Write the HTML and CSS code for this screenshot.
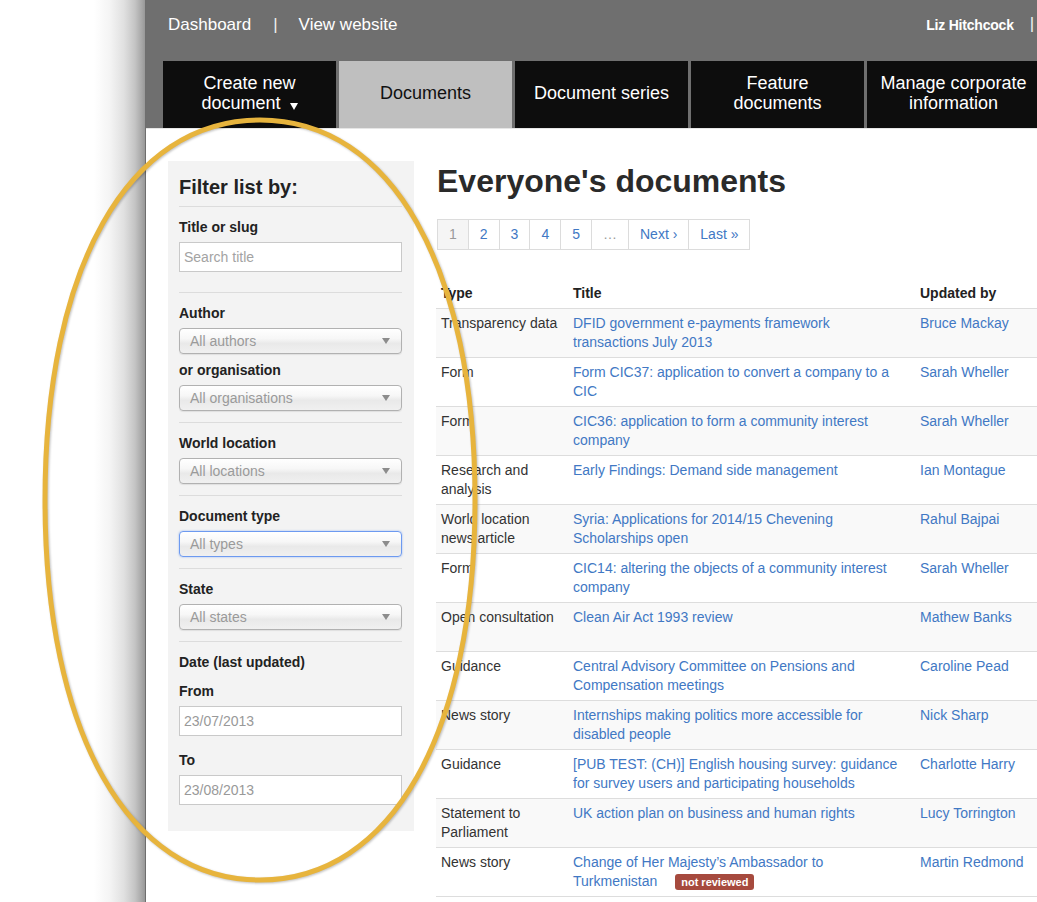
FILE: index.html
```html
<!DOCTYPE html>
<html lang="en">
<head>
<meta charset="utf-8">
<title>Everyone's documents</title>
<link rel="stylesheet" href="styles.css">
</head>
<body>
<div class="frame">
  <div class="edge"></div>
  <div class="page">
    <header class="topbar">
      <div class="topnav">
        <a href="#">Dashboard</a><span class="sep">|</span><a href="#">View website</a>
        <div class="user"><span>Liz Hitchcock</span><span class="sep">|</span></div>
      </div>
      <nav class="tabs">
        <a class="tab" href="#"><span>Create new<br>document<i class="caret"></i></span></a>
        <a class="tab active" href="#"><span>Documents</span></a>
        <a class="tab" href="#"><span>Document series</span></a>
        <a class="tab" href="#"><span>Feature<br>documents</span></a>
        <a class="tab" href="#"><span>Manage corporate<br>information</span></a>
      </nav>
    </header>

    <div class="content">
      <aside class="filter">
        <h2 class="filter-title">Filter list by:</h2>
        <div class="fsec fsec-title">
          <label class="flabel">Title or slug</label>
          <input class="finput" type="text" placeholder="Search title">
        </div>
        <div class="fsec">
          <label class="flabel">Author</label>
          <div class="fsel"><span>All authors</span><i class="arrow"></i></div>
          <label class="flabel">or organisation</label>
          <div class="fsel"><span>All organisations</span><i class="arrow"></i></div>
        </div>
        <div class="fsec">
          <label class="flabel">World location</label>
          <div class="fsel"><span>All locations</span><i class="arrow"></i></div>
        </div>
        <div class="fsec">
          <label class="flabel">Document type</label>
          <div class="fsel focus"><span>All types</span><i class="arrow"></i></div>
        </div>
        <div class="fsec">
          <label class="flabel">State</label>
          <div class="fsel"><span>All states</span><i class="arrow"></i></div>
        </div>
        <div class="fsec fsec-date">
          <div class="flabel date-head">Date (last updated)</div>
          <label class="flabel">From</label>
          <input class="finput date-in" type="text" value="23/07/2013">
          <label class="flabel">To</label>
          <input class="finput" type="text" value="23/08/2013">
        </div>
      </aside>

      <main class="main">
        <h1>Everyone's documents</h1>
        <div class="pager">
          <a href="#">1</a><a href="#">2</a><a href="#">3</a><a href="#">4</a><a href="#">5</a><a href="#">…</a><a href="#">Next ›</a><a href="#">Last »</a>
        </div>
        <table class="docs">
          <colgroup><col class="c-type"><col class="c-title"><col class="c-upd"></colgroup>
          <thead>
            <tr><th>Type</th><th>Title</th><th>Updated by</th></tr>
          </thead>
          <tbody>
            <tr><td>Transparency data</td><td><a href="#">DFID government e-payments framework<br>transactions July 2013</a></td><td><a href="#">Bruce Mackay</a></td></tr>
            <tr><td>Form</td><td><a href="#">Form CIC37: application to convert a company to a<br>CIC</a></td><td><a href="#">Sarah Wheller</a></td></tr>
            <tr><td>Form</td><td><a href="#">CIC36: application to form a community interest<br>company</a></td><td><a href="#">Sarah Wheller</a></td></tr>
            <tr><td>Research and<br>analysis</td><td><a href="#">Early Findings: Demand side management</a></td><td><a href="#">Ian Montague</a></td></tr>
            <tr><td>World location<br>news article</td><td><a href="#">Syria: Applications for 2014/15 Chevening<br>Scholarships open</a></td><td><a href="#">Rahul Bajpai</a></td></tr>
            <tr><td>Form</td><td><a href="#">CIC14: altering the objects of a community interest<br>company</a></td><td><a href="#">Sarah Wheller</a></td></tr>
            <tr><td>Open consultation</td><td><a href="#">Clean Air Act 1993 review</a></td><td><a href="#">Mathew Banks</a></td></tr>
            <tr><td>Guidance</td><td><a href="#">Central Advisory Committee on Pensions and<br>Compensation meetings</a></td><td><a href="#">Caroline Pead</a></td></tr>
            <tr><td>News story</td><td><a href="#">Internships making politics more accessible for<br>disabled people</a></td><td><a href="#">Nick Sharp</a></td></tr>
            <tr><td>Guidance</td><td><a href="#">[PUB TEST: (CH)] English housing survey: guidance<br>for survey users and participating households</a></td><td><a href="#">Charlotte Harry</a></td></tr>
            <tr><td>Statement to<br>Parliament</td><td><a href="#">UK action plan on business and human rights</a></td><td><a href="#">Lucy Torrington</a></td></tr>
            <tr><td>News story</td><td><a href="#">Change of Her Majesty’s Ambassador to<br>Turkmenistan</a> <span class="badge">not reviewed</span></td><td><a href="#">Martin Redmond</a></td></tr>
          </tbody>
        </table>
      </main>
    </div>
  </div>
</div>

<svg class="annotation" width="1037" height="902" viewBox="0 0 1037 902" aria-hidden="true">
  <path d="M475 500 C475 732.8 391.7 880 260 880 C128.3 880 45 732.8 45 500 C45 267.2 128.3 120 260 120 C391.7 120 475 267.2 475 500 Z" fill="none" stroke="#e7b43d" stroke-width="5"/>
</svg>
</body>
</html>
```
FILE: styles.css
```css
* { box-sizing: border-box; }

html, body {
  margin: 0;
  height: 902px;
  overflow: hidden;
  background: #fff;
}

body {
  font-family: "Liberation Sans", Arial, sans-serif;
  font-size: 14px;
  color: #333;
}

a { text-decoration: none; }

.frame {
  display: flex;
  width: 1037px;
  height: 902px;
  overflow: hidden;
}

.edge {
  flex: none;
  width: 146px;
  background: linear-gradient(to right,
    #fff 0, #fff 94px, #f4f4f4 110px, #e0e0e0 124px, #c4c4c4 135px,
    #a6a6a6 142px, #9a9a9a 144.5px, #6e6e6e 145px, #6e6e6e 146px);
}

.page {
  flex: none;
  width: 977px;
}

/* ---------- top bar ---------- */
.topbar {
  background: #6f6f6f;
  border-bottom: 1px solid #e6e6e6;
}

.topnav {
  display: flex;
  height: 61px;
  padding: 15px 22px 0;
  line-height: 20px;
  color: #fff;
}

.topnav a {
  color: #fff;
  font-size: 17px;
}

.sep {
  font-size: 17px;
  margin: 0 21px 0 22px;
  color: #f0f0f0;
}

.user {
  margin-left: auto;
  margin-right: 67px;
  display: flex;
  font-size: 14px;
  font-weight: bold;
  letter-spacing: -0.2px;
}

.user .sep {
  margin: -1px 0 0 16px;
  font-weight: normal;
}

.tabs {
  display: flex;
  gap: 3px;
  margin-left: 17px;
  height: 67px;
}

.tab {
  flex: none;
  width: 173px;
  background: #0d0d0d;
  color: #fff;
  font-size: 18px;
  line-height: 20px;
  text-align: center;
  display: flex;
  align-items: center;
  justify-content: center;
  padding-bottom: 3px;
}

.tab.active {
  background: #bfbfbf;
  color: #111;
}

.caret {
  display: inline-block;
  width: 0;
  height: 0;
  margin-left: 9px;
  border-left: 4px solid transparent;
  border-right: 4px solid transparent;
  border-top: 7px solid #fff;
  vertical-align: -1px;
}

/* ---------- content ---------- */
.content {
  display: flex;
  align-items: flex-start;
  gap: 23px;
  padding: 32px 0 0 22px;
}

.filter {
  flex: none;
  width: 246px;
  background: #f3f3f3;
  padding: 14px 12px 0 11px;
}

.filter-title {
  margin: 0 0 7px;
  font-size: 20px;
  line-height: 24px;
  font-weight: bold;
  color: #222;
}

.fsec {
  border-top: 1px solid #dcdcdc;
  padding: 10px 0 11px;
}

.fsec-title { padding-bottom: 20px; }
.fsec-date { padding-bottom: 26px; }

.flabel {
  display: block;
  font-size: 14px;
  line-height: 20px;
  font-weight: bold;
  color: #222;
  margin-bottom: 5px;
}

.fsel + .flabel { margin-top: 6px; }
.flabel.date-head { margin-bottom: 9px; }

.finput {
  display: block;
  width: 100%;
  height: 30px;
  margin: 0;
  border: 1px solid #c9c9c9;
  background: #fff;
  padding: 0 4px;
  font: 14px "Liberation Sans", Arial, sans-serif;
  color: #999;
}

.finput.date-in { margin-bottom: 14px; }

.finput::placeholder { color: #a3a3a3; }

.fsel {
  display: flex;
  align-items: center;
  justify-content: space-between;
  height: 26px;
  border: 1px solid #b1b1b1;
  border-radius: 4px;
  background: linear-gradient(#ffffff 0%, #f7f7f7 40%, #e9e9e9 60%, #f0f0f0 100%);
  box-shadow: 0 1px 1px rgba(0, 0, 0, 0.08);
  padding: 0 11px 0 10px;
  color: #9a9a9a;
}

.fsel.focus {
  border-color: #6d9af0;
  box-shadow: 0 0 2px rgba(70, 130, 240, 0.6);
}

.arrow {
  width: 0;
  height: 0;
  border-left: 4px solid transparent;
  border-right: 4px solid transparent;
  border-top: 6px solid #8c8c8c;
}

/* ---------- main ---------- */
.main {
  flex: 1;
  min-width: 0;
  padding-top: 2px;
}

.main h1 {
  margin: 0 0 20px;
  font-size: 32px;
  line-height: 36px;
  font-weight: bold;
  color: #2a2a2a;
}

.pager {
  display: flex;
  height: 31px;
  margin-bottom: 29px;
}

.pager a {
  border: 1px solid #dcdcdc;
  border-left-width: 0;
  padding: 0 11px;
  line-height: 29px;
  color: #4178c4;
}

.pager a:first-child {
  border-left-width: 1px;
  background: #f5f5f5;
  color: #9a9a9a;
}

.pager a:nth-child(6) { color: #9a9a9a; }

.docs {
  width: calc(100% + 1px);
  margin-left: -1px;
  border-collapse: separate;
  border-spacing: 0;
  table-layout: fixed;
}

.c-type { width: 132px; }
.c-title { width: 347px; }

.docs th {
  text-align: left;
  padding: 5px;
  line-height: 19px;
  font-weight: bold;
  color: #222;
}

.docs td {
  border-top: 1px solid #dddddd;
  padding: 5px;
  line-height: 19px;
  vertical-align: top;
  color: #333;
}

.docs tbody tr { height: 49px; }
.docs tbody tr:nth-child(odd) td { background: #f9f9f9; }
.docs tbody tr:last-child td { border-bottom: 1px solid #dddddd; }

.docs a { color: #4178c4; }

.badge {
  display: inline-block;
  margin-left: 14px;
  padding: 1px 6px;
  border-radius: 3px;
  background: #a64a3e;
  color: #fff;
  font-size: 11px;
  line-height: 14px;
  font-weight: bold;
}

/* ---------- annotation overlay ---------- */
.annotation {
  position: absolute;
  top: 0;
  left: 0;
  pointer-events: none;
  filter: drop-shadow(1px 1px 1px rgba(0, 0, 0, 0.25));
}
```
